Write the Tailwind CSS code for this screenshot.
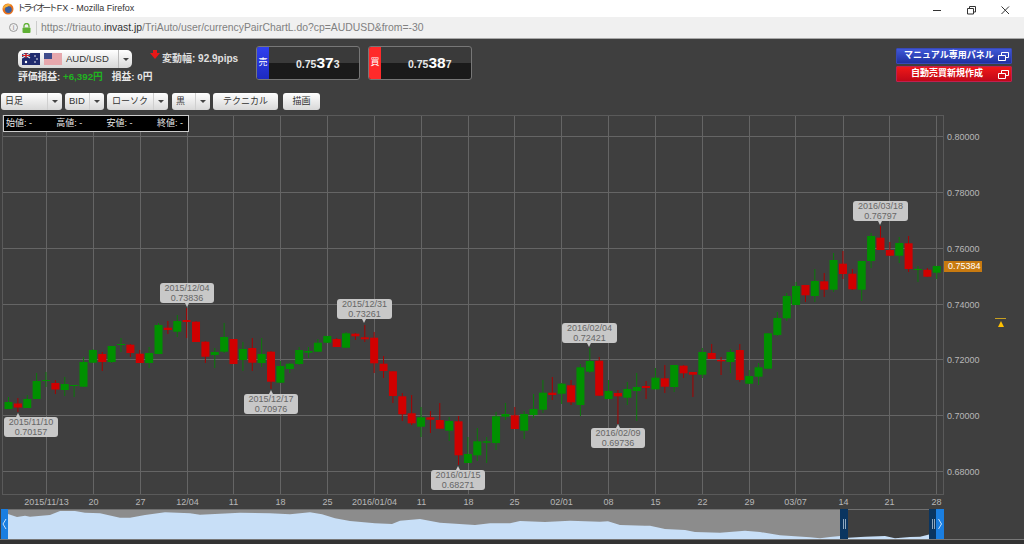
<!DOCTYPE html>
<html lang="ja">
<head>
    <meta charset="UTF-8">
    <title>トライオートFX</title>
    <script src="https://cdn.jsdelivr.net/npm/@tailwindcss/browser@4"></script>
</head>
<body class="w-[1024px] h-[544px] overflow-hidden bg-[#3f3f3f] font-['Liberation_Sans','Noto_Sans_CJK_JP',sans-serif]">

    <!-- Title bar -->
    <div class="h-[17px] bg-white flex items-center pl-[2px]">
        <svg width="12" height="12" viewBox="0 0 12 12">
            <circle cx="6" cy="6" r="5.5" fill="#e8711c"/>
            <circle cx="6.4" cy="6.6" r="3.4" fill="#3a5f9e"/>
            <path d="M1 4C3 1 7 0 10 2C8 2 6 3 5 4C3 4 2 5 2 7Z" fill="#f4b13a"/>
        </svg>
        <span class="ml-[3px] text-[9px] text-[#333] whitespace-nowrap"><span class="tracking-[-2.7px]">トライオート</span><span class="ml-[2px]">FX - Mozilla Firefox</span></span>
        <svg class="ml-auto" width="92" height="17" viewBox="0 0 92 17" fill="none" stroke="#333">
            <path d="M1 10.5H9"/>
            <path d="M35.5 8.5H41.5V14H35.5ZM37.5 8.5V6.5H43.5V12H41.5"/>
            <path d="M69.5 6.5L77 14M77 6.5L69.5 14"/>
        </svg>
    </div>

    <!-- URL bar -->
    <div class="h-[22px] bg-[#f0f0f0] border-b border-[#a8a8a8] flex items-center pl-[9px]">
        <span class="w-[9px] h-[9px] rounded-full border border-[#999] text-[7px] leading-[7px] text-center text-[#888]">i</span>
        <svg class="ml-[4px]" width="9" height="10" viewBox="0 0 9 10">
            <path d="M2 4.5V3A2.5 2.5 0 0 1 7 3V4.5" fill="none" stroke="#5fb034" stroke-width="1.3"/>
            <rect x="0.5" y="4.5" width="8" height="5.5" rx="1" fill="#5fb034"/>
        </svg>
        <span class="ml-[5px] w-px h-[14px] bg-[#ccc]"></span>
        <span class="ml-[4px] text-[10.4px] text-[#808080] whitespace-nowrap">https://triauto.<span class="text-[#333]">invast.jp</span>/TriAuto/user/currencyPairChartL.do?cp=AUDUSD&amp;from=-30</span>
    </div>

    <!-- Header -->
    <div class="h-[54px] flex pl-[18px] pr-[12px] pt-[7px]">
        <div class="w-[136px]">
            <div class="mt-[4px] w-[114px] h-[18px] rounded-[5px] bg-linear-to-b from-white to-[#d8d8d8] flex items-center pl-[4px]">
                <svg width="18" height="12" viewBox="0 0 18 12">
                    <rect width="18" height="12" fill="#1f2a6d"/>
                    <path d="M0 0L8 5M8 0L0 5" stroke="#e8e8e8" stroke-width="1.2"/>
                    <path d="M4 0V5M0 2.5H8" stroke="#d22" stroke-width="1.2"/>
                    <circle cx="13" cy="3" r="0.8" fill="#fff"/><circle cx="15" cy="6" r="0.8" fill="#fff"/>
                    <circle cx="13" cy="9" r="0.8" fill="#fff"/><circle cx="4" cy="9" r="1.2" fill="#fff"/>
                </svg>
                <svg class="ml-[4px]" width="18" height="12" viewBox="0 0 18 12">
                    <rect width="18" height="12" fill="#f4f0f0"/>
                    <path d="M0 1H18M0 3H18M0 5H18M0 7H18M0 9H18M0 11H18" stroke="#d9606a" stroke-width="1"/>
                    <rect width="8" height="6" fill="#3f4c8c"/>
                </svg>
                <span class="ml-[4px] text-[9.5px] text-[#333]">AUD/USD</span>
                <span class="ml-[9px] w-px h-[18px] bg-[#bbb]"></span>
                <span class="ml-[4px] w-0 h-0 border-x-[3px] border-x-transparent border-t-[3px] border-t-[#444]"></span>
            </div>
            <div class="mt-[2px] text-[9.75px] font-bold text-[#e8e8e8] whitespace-nowrap">評価損益: <span class="text-[#1fb51f]">+6,392円</span><span class="ml-[9px]">損益: 0円</span></div>
        </div>
        <div class="w-[102px] flex items-start whitespace-nowrap">
            <svg class="-ml-[4px] mt-[4px]" width="10" height="9" viewBox="0 0 10 9">
                <path d="M3 0H7V3H10L5 9L0 3H3Z" fill="#e81818"/>
            </svg>
            <span class="mt-[5px] ml-[2px] text-[10px] font-bold text-[#e0e0e0]">変動幅: 92.9pips</span>
        </div>
        <div class="w-[104px] h-[34px] rounded-[3px] border border-[#777] flex overflow-hidden bg-linear-to-b from-[#3a3a3a] from-50% to-[#1a1a1a] to-50%">
            <div class="w-[12px] bg-linear-to-b from-[#3040f0] to-[#1c2ac0] text-[9px] text-white flex items-center justify-center">売</div>
            <div class="flex-1 pl-[27px] pt-[6px] font-bold text-[#e8e8e8] text-[10.5px] leading-[19px] whitespace-nowrap">0.75<span class="text-[15.5px] text-white">37</span>3</div>
        </div>
        <div class="ml-[8px] w-[104px] h-[34px] rounded-[3px] border border-[#777] flex overflow-hidden bg-linear-to-b from-[#3a3a3a] from-50% to-[#1a1a1a] to-50%">
            <div class="w-[12px] bg-[#ff2a2a] text-[9px] text-white flex items-center justify-center">買</div>
            <div class="flex-1 pl-[27px] pt-[6px] font-bold text-[#e8e8e8] text-[10.5px] leading-[19px] whitespace-nowrap">0.75<span class="text-[15.5px] text-white">38</span>7</div>
        </div>
        <div class="ml-auto flex flex-col gap-[2px] pt-[2px]">
            <div class="w-[116px] h-[16px] rounded-[1px] bg-linear-to-b from-[#4058d8] to-[#2030a0] border border-[#3848b8] flex items-center text-[9px] font-bold text-white pl-[7px] whitespace-nowrap">
                マニュアル専用パネル
                <svg class="ml-auto mr-[2px]" width="11" height="9" viewBox="0 0 11 9" fill="none" stroke="#fff"><path d="M.5 3.5H7.5V8.5H.5ZM3.5 3V.5H10.5V5.5H8"/></svg>
            </div>
            <div class="w-[116px] h-[16px] rounded-[1px] bg-linear-to-b from-[#f01818] to-[#c00818] border border-[#c02050] flex items-center text-[9px] font-bold text-white pl-[14px] whitespace-nowrap">
                自動売買新規作成
                <svg class="ml-auto mr-[2px]" width="11" height="9" viewBox="0 0 11 9" fill="none" stroke="#fff"><path d="M.5 3.5H7.5V8.5H.5ZM3.5 3V.5H10.5V5.5H8"/></svg>
            </div>
        </div>
    </div>

    <!-- Toolbar -->
    <div class="h-[22px] flex items-start pl-[1px] text-[9px] text-[#333]">
        <div class="w-[61px] h-[17px] rounded-[3px] bg-linear-to-b from-white to-[#d8d8d8] flex items-center pl-[4px]">日足<span class="ml-auto w-[15px] h-full border-l border-[#d0d0d0] flex items-center justify-center"><span class="w-0 h-0 border-x-[3px] border-x-transparent border-t-[3px] border-t-[#444]"></span></span></div>
        <div class="ml-[3px] w-[39px] h-[17px] rounded-[3px] bg-linear-to-b from-white to-[#d8d8d8] flex items-center pl-[4px] text-[9.5px]">BID<span class="ml-auto w-[15px] h-full border-l border-[#d0d0d0] flex items-center justify-center"><span class="w-0 h-0 border-x-[3px] border-x-transparent border-t-[3px] border-t-[#444]"></span></span></div>
        <div class="ml-[3px] w-[61px] h-[17px] rounded-[3px] bg-linear-to-b from-white to-[#d8d8d8] flex items-center pl-[5px]">ローソク<span class="ml-auto w-[15px] h-full border-l border-[#d0d0d0] flex items-center justify-center"><span class="w-0 h-0 border-x-[3px] border-x-transparent border-t-[3px] border-t-[#444]"></span></span></div>
        <div class="ml-[4px] w-[38px] h-[17px] rounded-[3px] bg-linear-to-b from-white to-[#d8d8d8] flex items-center pl-[4px]">黒<span class="ml-auto w-[15px] h-full border-l border-[#d0d0d0] flex items-center justify-center"><span class="w-0 h-0 border-x-[3px] border-x-transparent border-t-[3px] border-t-[#444]"></span></span></div>
        <div class="ml-[3px] w-[65px] h-[17px] rounded-[3px] bg-linear-to-b from-white to-[#d8d8d8] flex items-center justify-center">テクニカル</div>
        <div class="ml-[5px] w-[37px] h-[17px] rounded-[3px] bg-linear-to-b from-white to-[#d8d8d8] flex items-center justify-center">描画</div>
    </div>

    <!-- Chart -->
    <div class="relative h-[394px]">
        <svg id="chart" class="block" width="1024" height="394" viewBox="0 115 1024 394"></svg>

        <div class="absolute left-[3px] top-0 w-[186px] h-[17px] bg-black border border-[#ccc] flex items-center text-[9px] text-[#e8e8e8]">
            <span class="w-[50.3px] pl-[2px]">始値: -</span>
            <span class="w-[50.3px] pl-[2px]">高値: -</span>
            <span class="w-[50.3px] pl-[2px]">安値: -</span>
            <span class="pl-[2px]">終値: -</span>
        </div>

        <div class="absolute left-[944px] top-[146px] w-[38px] h-[11px] bg-[#c87a10] text-white text-[9px] leading-[11px] pl-[4px]">0.75384</div>

        <!-- High / low callouts -->
        <div class="absolute left-[4px] top-[302px] w-[54px] h-[20px] rounded-[3px] bg-[#c8c8c8] text-[#666] text-[9px] leading-[10px] text-center">2015/11/10<br>0.70157
            <span class="absolute left-[12px] -top-[4px] w-0 h-0 border-x-[2px] border-x-transparent border-b-[4px] border-b-[#c8c8c8]"></span></div>
        <div class="absolute left-[160px] top-[168px] w-[54px] h-[20px] rounded-[3px] bg-[#c8c8c8] text-[#666] text-[9px] leading-[10px] text-center">2015/12/04<br>0.73836
            <span class="absolute left-[25px] -bottom-[4px] w-0 h-0 border-x-[2px] border-x-transparent border-t-[4px] border-t-[#c8c8c8]"></span></div>
        <div class="absolute left-[244px] top-[279px] w-[54px] h-[20px] rounded-[3px] bg-[#c8c8c8] text-[#666] text-[9px] leading-[10px] text-center">2015/12/17<br>0.70976
            <span class="absolute left-[25px] -top-[4px] w-0 h-0 border-x-[2px] border-x-transparent border-b-[4px] border-b-[#c8c8c8]"></span></div>
        <div class="absolute left-[337px] top-[184px] w-[55px] h-[20px] rounded-[3px] bg-[#c8c8c8] text-[#666] text-[9px] leading-[10px] text-center">2015/12/31<br>0.73261
            <span class="absolute left-[25px] -bottom-[4px] w-0 h-0 border-x-[2px] border-x-transparent border-t-[4px] border-t-[#c8c8c8]"></span></div>
        <div class="absolute left-[431px] top-[355px] w-[54px] h-[20px] rounded-[3px] bg-[#c8c8c8] text-[#666] text-[9px] leading-[10px] text-center">2016/01/15<br>0.68271
            <span class="absolute left-[25px] -top-[4px] w-0 h-0 border-x-[2px] border-x-transparent border-b-[4px] border-b-[#c8c8c8]"></span></div>
        <div class="absolute left-[562px] top-[208px] w-[55px] h-[20px] rounded-[3px] bg-[#c8c8c8] text-[#666] text-[9px] leading-[10px] text-center">2016/02/04<br>0.72421
            <span class="absolute left-[25px] -bottom-[4px] w-0 h-0 border-x-[2px] border-x-transparent border-t-[4px] border-t-[#c8c8c8]"></span></div>
        <div class="absolute left-[591px] top-[313px] w-[54px] h-[20px] rounded-[3px] bg-[#c8c8c8] text-[#666] text-[9px] leading-[10px] text-center">2016/02/09<br>0.69736
            <span class="absolute left-[25px] -top-[4px] w-0 h-0 border-x-[2px] border-x-transparent border-b-[4px] border-b-[#c8c8c8]"></span></div>
        <div class="absolute left-[853px] top-[86px] w-[55px] h-[20px] rounded-[3px] bg-[#c8c8c8] text-[#666] text-[9px] leading-[10px] text-center">2016/03/18<br>0.76797
            <span class="absolute left-[25px] -bottom-[4px] w-0 h-0 border-x-[2px] border-x-transparent border-t-[4px] border-t-[#c8c8c8]"></span></div>
    </div>

    <!-- Navigator -->
    <svg id="nav" class="block" width="1024" height="30" viewBox="0 509 1024 30"></svg>
    <div class="h-[1px] bg-[#777]"></div>
    <div class="h-[4px] bg-[#333]"></div>

    <script>
        // [green?, body top, body bottom, wick high, wick low] in pixels
        const candles = [
            [1,402,409,397,409],[0,403.5,407.5,398,412],[1,399,408,395,408],[1,381,399,373,399],[1,380,381,372,387],
            [0,383,389.5,380,394],[1,384,390,377,396],[1,385,386,385,397],[1,362,386.7,357,387],[1,350,362.7,349,363],
            [0,354,362,352,371],[1,346,362,346,363],[1,344,345,338,352],[0,344.7,353,344,357],[0,353.7,363,350,363],
            [1,353,363,347,368],[1,325,354,323,354],[0,327.7,330,321,334],[1,321,331.7,315,337],[0,320,322,308,338],
            [0,321.7,342,321,342],[0,341.7,356.7,341,363],[1,352,355,348,368],[1,337,351.7,323,353],[0,339,364,339,364],
            [1,349,360,342,371],[0,348,362.7,338,371],[1,354,363,338,367],[0,351.7,381.7,351,389],[1,366,382.7,361,383],
            [1,363.7,369,363,373],[1,350,364,347,365],[1,351,352.7,347,358],[1,342.7,351.7,339,352],[1,336,342.7,336,343],
            [0,339,347,338,347],[1,333.3,347.7,332,348],[0,333.7,336.3,333,340],[0,337.3,339.3,325,342],[0,337.7,363.3,332,373],
            [0,363.7,371,356,378],[0,371.3,396,371,403],[0,396.3,414.3,393,421],[0,413.3,423.3,395,425],[1,417.3,426.7,407,437],
            [0,417.3,419.7,411,433],[0,420,428.7,403,429],[1,421,430.7,417,441],[0,421.3,455.3,416,465],[1,454,463,437,463],
            [1,441.3,455.3,428,461],[1,441.3,442.7,437,463],[1,416.3,443,412,450],[1,414,416.7,403,420],[0,415.3,429,407,429],
            [1,414,430.7,411,439],[1,409,415,394,418],[1,392.7,409.7,380,413],[0,392.7,395,377,400],[1,383.7,393.7,383,404],
            [0,385.3,402.3,380,405],[1,367.3,405,364,416],[1,361,371.7,348,373],[0,360.7,395.7,357,396],[1,391,399,380,399],
            [0,393,396.3,390,424],[1,389,397.7,382,405],[1,387,391,373,421],[0,386,388,381,399],[1,377.7,389.3,368,389],
            [0,378.3,386.7,365,393],[1,365,387,365,392],[0,365.7,373.3,365,378],[0,372,374.7,372,397],[1,352,374.7,348,378],
            [0,353,359,344,359],[0,360,361.3,357,375],[1,352,362,349,373],[0,350,380,344,382],[1,376,383.7,370,384],
            [1,367.3,376.7,363,385],[1,333.3,368.7,333,369],[1,318,335,312,336],[1,296,318.3,293,321],[1,286,305,282,305],
            [0,285,295.3,285,302],[1,281,296,269,302],[0,281.3,289.7,273,297],[1,260,289.7,253,292],[0,263.7,274,251,279],
            [0,273.7,289.3,269,290],[1,261,289.7,261,301],[1,236,261,233,268],[0,237.7,250,226,250],[0,250,255.7,242,256],
            [1,243,255.7,237,263],[0,243.3,269,236,272],[1,269,270,266,282],[0,269.7,276.7,268,277],[1,266,272.7,266,279],
        ];
        const gridX = [46.5,93.5,140.5,187.5,233.5,280.5,327.5,374.5,421.5,468.5,514.5,561.5,608.5,655.5,702.5,749.5,795.5,843.5,889.5,936.5];
        const gridY = [[136.5,'0.80000'],[192.5,'0.78000'],[248.5,'0.76000'],[304.5,'0.74000'],[359.5,'0.72000'],[415.5,'0.70000'],[471.5,'0.68000']];
        const dates = ['2015/11/13','20','27','12/04','11','18','25','2016/01/04','11','18','25','02/01','08','15','22','29','03/07','14','21','28'];

        let svg = '';
        gridX.forEach((x, i) => {
            svg += `<line x1="${x}" x2="${x}" y1="115" y2="494" stroke="#656565"/>`;
            svg += `<text x="${x}" y="505" text-anchor="middle" font-size="9" fill="#b8b8b8">${dates[i]}</text>`;
        });
        gridY.forEach(([y, label]) => {
            svg += `<line x1="2" x2="943" y1="${y}" y2="${y}" stroke="#656565"/>`;
            svg += `<text x="947" y="${y + 3.5}" font-size="9" fill="#b8b8b8">${label}</text>`;
        });
        svg += `<rect x="2.5" y="115.5" width="941" height="379" fill="none" stroke="#5a5a5a"/>`;

        candles.forEach((c, i) => {
            const x = 8.5 + i * 9.376;
            const body = c[0] ? '#009000' : '#d00000';
            const wick = c[0] ? '#0a7a0a' : '#a80000';
            svg += `<line x1="${x}" x2="${x}" y1="${c[3]}" y2="${c[4]}" stroke="${wick}"/>`;
            svg += `<rect x="${x - 4}" y="${c[1]}" width="8" height="${c[2] - c[1]}" fill="${body}"/>`;
        });

        svg += `<line x1="995" x2="1006" y1="318.5" y2="318.5" stroke="#c8a020"/>`;
        svg += `<path d="M1001 321L1004 327H998Z" fill="#ffc000"/>`;
        document.getElementById('chart').innerHTML = svg;

        // navigator area outline
        const outline = [[8,514],[17,517],[25,515.7],[30,516.7],[50,515],[60,511],[75,511],[85,512.7],[100,513.3],[120,517.7],[130,517.7],[145,515],[165,512.3],[190,513.3],[200,514.7],[240,512.7],[270,513.3],[290,514.3],[310,512.3],[322,514.3],[335,518.3],[350,521],[375,523.3],[392,524],[400,520.7],[420,519],[440,522.7],[475,525],[490,523.3],[510,523.3],[520,521],[545,522],[570,520.7],[600,521.7],[608,521.3],[620,525],[645,525.7],[650,525.7],[665,529],[685,530],[695,532],[720,532.7],[745,530.7],[760,532],[780,535.3],[810,537.3],[820,538.3],[830,537],[840,536],[848,537.7],[865,536.7],[885,536],[895,538.3],[910,537],[920,536.7],[930,534.3]];
        const pts = outline.map(p => p.join(',')).join(' ');
        document.getElementById('nav').innerHTML = `
            <rect x="1" y="509" width="840" height="30" fill="#8c8c8c"/>
            <polygon points="8,539 ${pts} 930,539" fill="#c8dff7"/>
            <line x1="1" x2="944" y1="509.5" y2="509.5" stroke="#707070"/>
            <rect x="1" y="509" width="7" height="30" fill="#1a7ee0"/>
            <path d="M6 519L3 524L6 529" fill="none" stroke="#c8e0f8"/>
            <rect x="840" y="509" width="8" height="30" fill="#0a3560"/>
            <path d="M843.5 519V529M845.5 519V529" stroke="#8fa8c0"/>
            <rect x="929" y="509" width="8" height="30" fill="#0a3560"/>
            <path d="M932.5 519V529M934.5 519V529" stroke="#8fa8c0"/>
            <rect x="936" y="509" width="8" height="30" fill="#1a7ee0"/>
            <path d="M938.5 519L941.5 524L938.5 529" fill="none" stroke="#c8e0f8"/>`;
    </script>
</body>
</html>
